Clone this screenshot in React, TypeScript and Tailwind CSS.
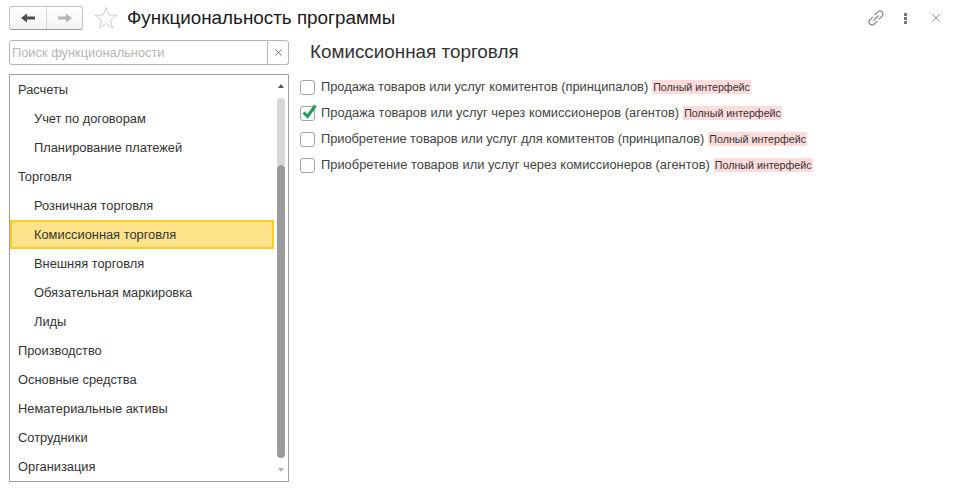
import { X } from "lucide-react";

const FONT = "font-['Liberation_Sans',Arial,sans-serif]";

const menu = [
  { label: "Расчеты" },
  { label: "Учет по договорам", sub: true },
  { label: "Планирование платежей", sub: true },
  { label: "Торговля" },
  { label: "Розничная торговля", sub: true },
  { label: "Комиссионная торговля", sub: true, active: true },
  { label: "Внешняя торговля", sub: true },
  { label: "Обязательная маркировка", sub: true },
  { label: "Лиды", sub: true },
  { label: "Производство" },
  { label: "Основные средства" },
  { label: "Нематериальные активы" },
  { label: "Сотрудники" },
  { label: "Организация" },
];

const options = [
  { label: "Продажа товаров или услуг комитентов (принципалов)", checked: false, tracking: "tracking-[-0.02px]" },
  { label: "Продажа товаров или услуг через комиссионеров (агентов)", checked: true, tracking: "tracking-[0.055px]" },
  { label: "Приобретение товаров или услуг для комитентов (принципалов)", checked: false, tracking: "tracking-[-0.05px]" },
  { label: "Приобретение товаров или услуг через комиссионеров (агентов)", checked: false, tracking: "tracking-[0.017px]" },
];

const Header = () => (
  <div className="flex h-[24px] items-center">
    {/* Назад / вперед */}
    <div className="flex h-[24px] w-[74px] rounded-[3px] border border-[#c4c4c4] border-b-[#9a9a9a] bg-gradient-to-b from-white to-[#f3f3f3]">
      <div className="flex w-[37px] items-center justify-center border-r border-[#d4d4d4]">
        <svg width="14" height="10" viewBox="0 0 14 10">
          <path d="M0 5 L6 0.5 V3.5 H14 V6.5 H6 V9.5 Z" fill="#4a4a4a" />
        </svg>
      </div>
      <div className="flex flex-1 items-center justify-center">
        <svg width="14" height="10" viewBox="0 0 14 10">
          <path d="M14 5 L8 0.5 V3.5 H0 V6.5 H8 V9.5 Z" fill="#b4b4b4" />
        </svg>
      </div>
    </div>
    <svg className="ml-[11px]" width="24" height="24" viewBox="0 0 24 24">
      <path
        d="M12 1.5 L14.8 9 L22.8 9.3 L16.5 14.2 L18.7 22 L12 17.5 L5.3 22 L7.5 14.2 L1.2 9.3 L9.2 9 Z"
        fill="none"
        stroke="#cfcfcf"
        strokeWidth="1"
      />
    </svg>
    <h1 className="ml-[9px] mt-[1px] text-[18.85px] leading-none text-[#1a1a1a]">Функциональность программы</h1>
    <div className="ml-auto flex items-center">
      <svg width="16" height="16" viewBox="0 0 16 16" fill="none" stroke="#8a8a8a" strokeWidth="1.2">
        <path d="M6.5 5 L9.8 1.9 A2.6 2.6 0 0 1 14 6.2 L11 9.2" />
        <path d="M9.5 11 L6.2 14.1 A2.6 2.6 0 0 1 2 9.8 L5 6.8" />
        <path d="M5.5 10.5 L10.5 5.5" />
      </svg>
      <div className="ml-[20px] flex flex-col gap-[1px]">
        <span className="h-[3px] w-[3px] bg-[#777]" />
        <span className="h-[3px] w-[3px] bg-[#777]" />
        <span className="h-[3px] w-[3px] bg-[#777]" />
      </div>
      <X className="ml-[22px] mr-[15px]" size={14} strokeWidth={1.3} color="#777" />
    </div>
  </div>
);

const Sidebar = () => (
  <div className="flex w-[280px] flex-col">
    <div className="flex h-[25px] rounded-[3px] border border-[#b5b5b5]">
      <div className="flex flex-1 items-center pl-[2px] text-[12.85px] text-[#b5b5b5]">Поиск функциональности</div>
      <div className="flex w-[21px] items-center justify-center border-l border-[#b5b5b5]">
        <X size={11} strokeWidth={2} color="#666" />
      </div>
    </div>
    <div className="relative mt-[9px] h-[408px] border border-[#a0a0a0]">
      {menu.map((item) => (
        <div
          key={item.label}
          className={
            "flex h-[29px] items-center text-[12.85px] text-[#333] " +
            (item.sub ? "pl-[24px] " : "pl-[8px] ") +
            (item.active ? "mr-[14px] border-2 border-[#ffcb21] bg-[#ffe38b] !pl-[22px]" : "")
          }
        >
          {item.label}
        </div>
      ))}
      {/* Полоса прокрутки */}
      <div className="absolute right-[3px] top-[9px] flex w-[8px] flex-col items-center">
        <div className="h-0 w-0 border-x-[3px] border-b-[4px] border-x-transparent border-b-[#555]" />
        <div className="mt-[10px] h-[67px] w-[8px] rounded-t-[4px] bg-[#d6d6d6]" />
        <div className="h-[293px] w-[8px] rounded-[4px] bg-[#9b9b9b]" />
        <div className="mt-[10px] h-0 w-0 border-x-[3px] border-t-[4px] border-x-transparent border-t-[#b0b0b0]" />
      </div>
    </div>
  </div>
);

const Option = ({ label, checked, tracking }: { label: string; checked: boolean; tracking: string }) => (
  <div className="flex h-[26px] items-center">
    <div className="relative h-[15px] w-[15px] rounded-[3px] border border-[#a5a5a5] bg-white">
      {checked && (
        <svg className="absolute left-[1px] -top-[4px]" width="15" height="16" viewBox="0 0 15 16">
          <path d="M1.5 9.5 L5.5 13.5 L13.5 2.5" fill="none" stroke="#1f9a57" strokeWidth="3" />
        </svg>
      )}
    </div>
    <span className={`ml-[6px] text-[12.85px] text-[#444] ${tracking}`}>{label}</span>
    <span className="ml-[4px] bg-[#ffdcdc] px-[1px] text-[10.7px] leading-[14px] text-[#333]">Полный интерфейс</span>
  </div>
);

export default function App() {
  return (
    <div className={`h-[489px] w-[958px] overflow-hidden bg-white pl-[9px] pt-[6px] ${FONT}`}>
      <Header />
      <div className="mt-[10px] flex">
        <Sidebar />
        <div className="ml-[11px] flex-1">
          <h2 className="ml-[10px] text-[18.85px] leading-[24px] text-[#333]">Комиссионная торговля</h2>
          <div className="mt-[10px]">
            {options.map((o) => (
              <Option key={o.label} label={o.label} checked={o.checked} tracking={o.tracking} />
            ))}
          </div>
        </div>
      </div>
    </div>
  );
}
